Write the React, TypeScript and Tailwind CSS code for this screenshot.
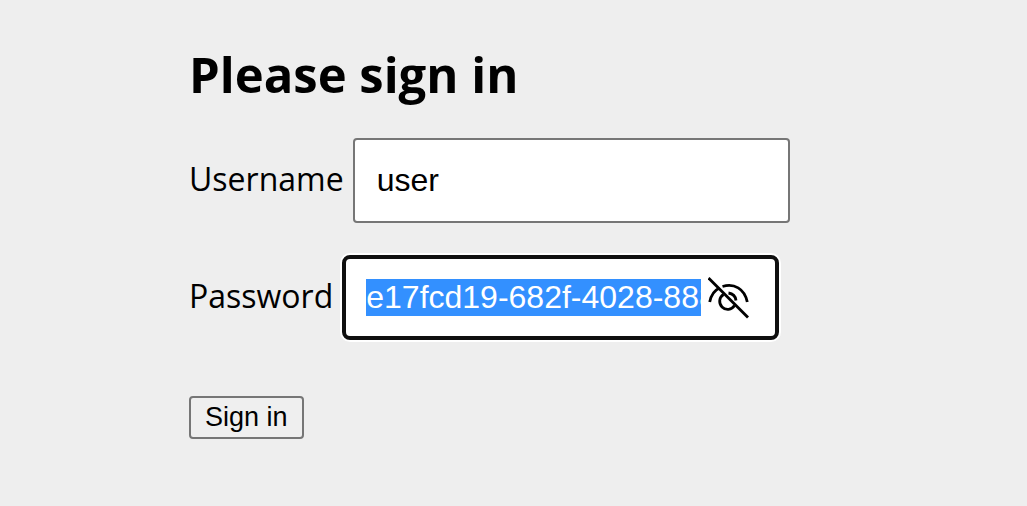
import { useEffect, useRef, useState } from "react";

function EyeOffIcon() {
  return (
    <svg width="42" height="42" viewBox="0 0 42 42" fill="none" stroke="#000" strokeWidth="2.8" aria-hidden="true">
      <path d="M0.500 1 40 40.500" />
      <path d="M1.700 25C3 18.500 6 13.500 11.500 11" />
      <path d="M14.500 9.500C26 6 36.500 11.500 39.300 25" />
      <path d="M15.500 17.500A8 8 0 1 0 26.500 28.500" />
      <path d="M20.500 16C24.500 16.500 27.500 19.500 28 23.500" />
    </svg>
  );
}

export default function App() {
  const [username, setUsername] = useState("user");
  const [password, setPassword] = useState("e17fcd19-682f-4028-888");
  const passwordRef = useRef<HTMLInputElement>(null);

  useEffect(() => {
    const field = passwordRef.current;
    if (!field) return;
    field.focus();
    field.setSelectionRange(0, field.value.length, "backward");
    const frame = requestAnimationFrame(() => {
      field.scrollLeft = 0;
    });
    return () => cancelAnimationFrame(frame);
  }, []);

  return (
    <main className="min-h-screen bg-[#eeeeee] px-4 pt-[42px] font-['Open_Sans','Noto_Sans',sans-serif] text-black">
      <form className="mx-auto max-w-[649px]" onSubmit={(e) => e.preventDefault()}>
        <h1 className="text-[49px] leading-[64px] font-bold">Please sign in</h1>
        <div className="mt-8 flex items-center gap-[9px]">
          <label htmlFor="username" className="pb-[3px] text-[32px]">Username</label>
          <input
            id="username"
            type="text"
            value={username}
            onChange={(e) => setUsername(e.target.value)}
            className="h-[85px] w-[437px] min-w-0 rounded-[4px] border-2 border-[#767676] bg-white px-[22px] font-['Liberation_Sans',sans-serif] text-[32px] outline-none"
          />
        </div>
        <div className="mt-8 flex items-center gap-[9px]">
          <label htmlFor="password" className="pb-[3px] text-[32px]">Password</label>
          <div className="flex h-[85px] w-[437px] min-w-0 items-center gap-[7px] rounded-[8px] border-4 border-[#101010] bg-white pr-[25px] pl-5 ring-2 ring-white">
            <input
              id="password"
              ref={passwordRef}
              type="text"
              value={password}
              onChange={(e) => setPassword(e.target.value)}
              className="min-w-0 flex-1 font-['Liberation_Sans',sans-serif] text-[32px] leading-[37px] caret-transparent outline-none selection:bg-[#3390ff] selection:text-white"
            />
            <button type="button" aria-label="Hide password">
              <EyeOffIcon />
            </button>
          </div>
        </div>
        <button
          type="submit"
          className="mt-14 h-[43px] rounded-[4px] border-2 border-[#767676] bg-[#efefef] px-[14px] font-['Liberation_Sans',sans-serif] text-[27px] leading-[39px]"
        >
          Sign in
        </button>
      </form>
    </main>
  );
}
